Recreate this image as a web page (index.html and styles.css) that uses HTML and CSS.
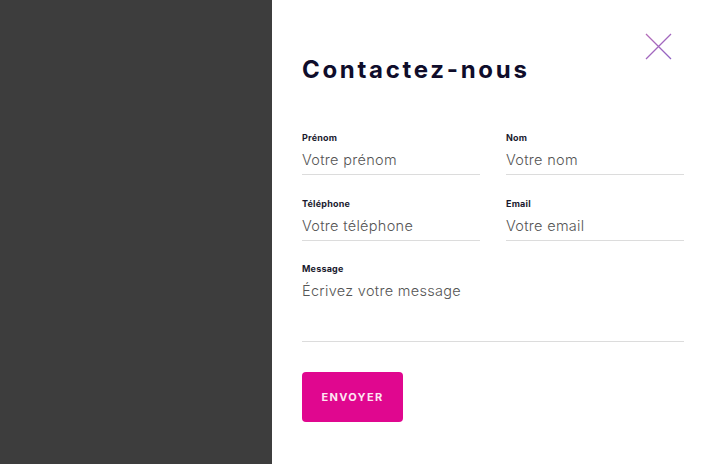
FILE: index.html
```html
<!DOCTYPE html>
<html lang="fr">
<head>
<meta charset="utf-8">
<title>Contactez-nous</title>
<link rel="stylesheet" href="styles.css">
</head>
<body>
<div class="page">
  <div class="backdrop"></div>
  <aside class="panel">
    <button class="close" aria-label="Fermer">
      <svg width="27" height="27" viewBox="0 0 27 27"><defs><linearGradient id="g" x1="0" y1="0" x2="1" y2="1"><stop offset="0" stop-color="#b56cb8"/><stop offset="1" stop-color="#8f63c4"/></linearGradient></defs><path d="M1 1 L26 26 M26 1 L1 26" stroke="url(#g)" stroke-width="1.3" fill="none"/></svg>
    </button>
    <h1 class="title">Contactez-nous</h1>
    <form class="form">
      <div class="grid">
        <label class="field">
          <span class="label">Prénom</span>
          <span class="input">Votre prénom</span>
        </label>
        <label class="field">
          <span class="label">Nom</span>
          <span class="input">Votre nom</span>
        </label>
        <label class="field">
          <span class="label">Téléphone</span>
          <span class="input">Votre téléphone</span>
        </label>
        <label class="field">
          <span class="label">Email</span>
          <span class="input">Votre email</span>
        </label>
      </div>
      <label class="field message">
        <span class="label">Message</span>
        <span class="input textarea">Écrivez votre message</span>
      </label>
      <button type="button" class="send">ENVOYER</button>
    </form>
  </aside>
</div>
</body>
</html>
```
FILE: styles.css
```css
* { box-sizing: border-box; }
html, body { margin: 0; padding: 0; }
body { font-family: "Inter", "Open Sans", sans-serif; }
.page { display: flex; width: 704px; height: 464px; overflow: hidden; }
.backdrop { width: 272px; flex: none; background: #3d3d3d; }
.panel { position: relative; flex: 1; background: #fff; padding: 56px 20px 0 30px; }
.close { position: absolute; top: 33px; left: 373px; width: 27px; height: 27px; padding: 0; border: 0; background: none; }
.close svg { display: block; }
.title { margin: 0; font-size: 24px; font-weight: 700; letter-spacing: 2.7px; color: #0f0d2b; line-height: 28px; }
.form { margin-top: 48px; width: 382px; }
.grid { display: grid; grid-template-columns: 178px 178px; column-gap: 26px; row-gap: 23px; }
.field { display: flex; flex-direction: column; }
.label { font-size: 9px; font-weight: 700; color: #1a1a2e; line-height: 12px; letter-spacing: 0.2px; }
.input { font-size: 14.5px; font-weight: 300; color: #555; line-height: 20px; letter-spacing: 0.3px; margin-top: 6px; padding-bottom: 4px; border-bottom: 1px solid #dcdcdc; }
.message { margin-top: 22px; }
.textarea { height: 61px; }
.send { margin-top: 30px; width: 101px; height: 50px; border: 0; border-radius: 4px; background: #e0078f; color: #fde6f2; font-family: inherit; font-size: 11px; font-weight: 700; letter-spacing: 1.3px; padding: 0; }
```
